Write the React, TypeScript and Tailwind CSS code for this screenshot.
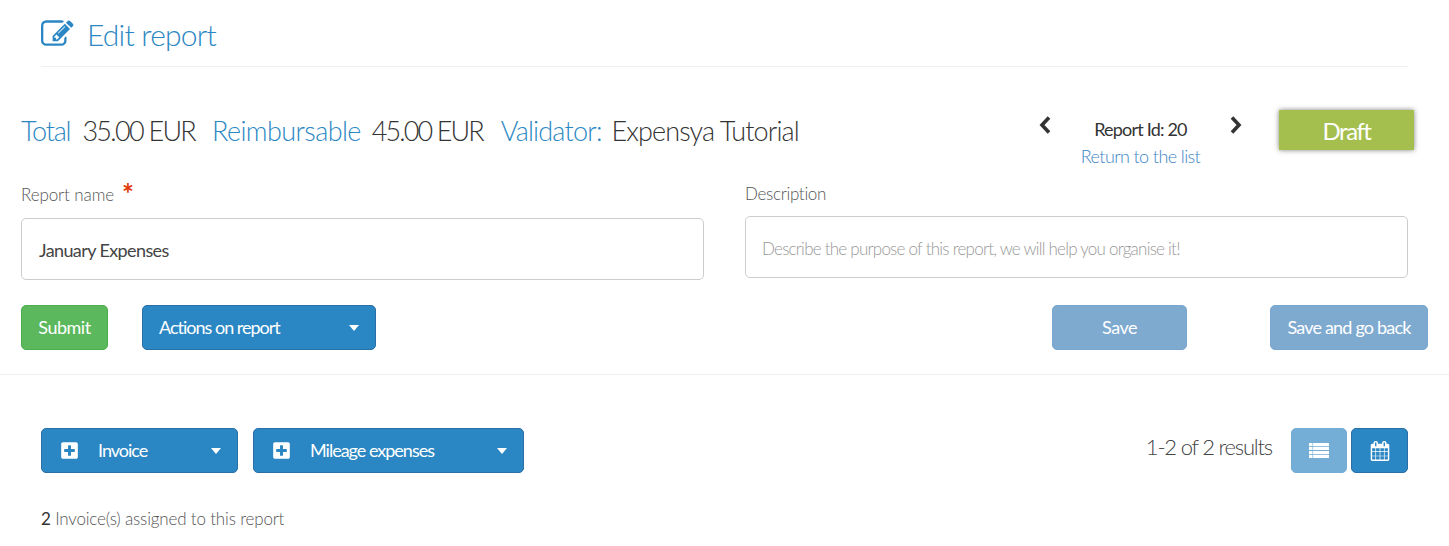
import { FaPlusSquare } from 'react-icons/fa';

function Caret() {
  return <span className="h-0 w-0 border-x-[5.5px] border-t-[6px] border-x-transparent border-t-white" />;
}

function BlueDropdown({ label, width, plus }: { label: string; width: string; plus?: boolean }) {
  return (
    <button className={`flex h-[45px] ${width} items-center rounded-[5px] border border-[#2a6fa6] bg-[#2b87c3] pr-[16px] text-[18px] text-white ${plus ? 'pl-[18px]' : 'pl-[16px]'}`}>
      {plus ? <FaPlusSquare size={19} className="mr-[19px]" /> : null}
      <span className="flex-1 text-left tracking-[-1px]">{label}</span>
      <Caret />
    </button>
  );
}

function EditIcon() {
  return (
    <svg viewBox="0 0 1792 1792" className="mr-[13.5px] h-[32.5px] w-[32.5px]" fill="currentColor">
      <path d="M888 1184l116-116-152-152-116 116v56h96v96h56zm440-720q-16-16-33 1l-350 350q-17 17-1 33t33-1l350-350q17-17 1-33zm80 594v190q0 119-84.500 203.500t-203.500 84.500h-832q-119 0-203.500-84.500t-84.500-203.500v-832q0-119 84.500-203.500t203.500-84.500h832q63 0 117 25 15 7 18 23 3 17-9 29l-49 49q-14 14-32 8-23-6-45-6h-832q-66 0-113 47t-47 113v832q0 66 47 113t113 47h832q66 0 113-47t47-113v-126q0-13 9-22l64-64q15-15 35-7t20 29zm-96-738l288 288-672 672h-288v-288zm444 132l-92 92-288-288 92-92q28-28 68-28t68 28l152 152q28 28 28 68t-28 68z" />
    </svg>
  );
}

function CalendarIcon() {
  return (
    <svg viewBox="0 0 1792 1792" className="h-[20px] w-[20px]" fill="currentColor">
      <path d="M192 1664h288v-288h-288v288zm352 0h320v-288h-320v288zm-352-352h288v-320h-288v320zm352 0h320v-320h-320v320zm-352-384h288v-288h-288v288zm736 736h320v-288h-320v288zm-384-736h320v-288h-320v288zm768 736h288v-288h-288v288zm-384-352h320v-320h-320v320zm-352-864v-288q0-13-9.500-22.500t-22.500-9.500h-64q-13 0-22.500 9.500t-9.500 22.500v288q0 13 9.500 22.500t22.500 9.500h64q13 0 22.500-9.500t9.500-22.500zm736 864h288v-320h-288v320zm-384-384h320v-288h-320v288zm384 0h288v-288h-288v288zm32-480v-288q0-13-9.500-22.500t-22.500-9.500h-64q-13 0-22.500 9.500t-9.500 22.500v288q0 13 9.500 22.500t22.500 9.500h64q13 0 22.500-9.500t9.500-22.500zm384-64v1280q0 52-38 90t-90 38h-1408q-52 0-90-38t-38-90v-1280q0-52 38-90t90-38h128v-96q0-66 47-113t113-47h64q66 0 113 47t47 113v96h384v-96q0-66 47-113t113-47h64q66 0 113 47t47 113v96h128q52 0 90 38t38 90z" />
    </svg>
  );
}

function ListIcon() {
  return (
    <svg viewBox="0 0 20 15" className="h-[15px] w-[20px]" fill="currentColor">
      <path d="M0 0h3.500v3.200H0zM4.100 0H20v3.200H4.100zM0 3.900h3.500v3.200H0zM4.100 3.900H20v3.200H4.100zM0 7.900h3.500v3.200H0zM4.100 7.900H20v3.200H4.100zM0 11.800h3.500V15H0zM4.100 11.800H20V15H4.100z" />
    </svg>
  );
}

function Chevron({ points }: { points: string }) {
  return (
    <svg viewBox="0 0 12 18" className="h-[18px] w-[12px]" fill="none" stroke="#333" strokeWidth="3.6">
      <polyline points={points} />
    </svg>
  );
}

export default function App() {
  return (
    <div className="h-[546px] w-full overflow-hidden bg-white font-['Lato',sans-serif] text-[#333]">
      <div className="mx-[41px] flex h-[67px] items-center border-b border-[#eee] pt-[3px] text-[#2b87c3]">
        <EditIcon />
        <h1 className="text-[30px] font-light tracking-[-0.8px]">Edit report</h1>
      </div>

      <div className="mt-[42px] flex h-[59px] items-start pl-[21px] pr-[35px]">
        <div className="mt-[6px] flex flex-1 items-center text-[27px] font-light leading-[32px] tracking-[-0.6px]">
          <span className="tracking-[-1.2px] text-[#2b87c3]">Total</span>
          <span className="ml-[12px] tracking-[-1.7px]">35.00 EUR</span>
          <span className="ml-[17px] text-[#2b87c3]">Reimbursable</span>
          <span className="ml-[11px] tracking-[-1.9px]">45.00 EUR</span>
          <span className="ml-[18px] tracking-[-0.8px] text-[#2b87c3]">Validator:</span>
          <span className="ml-[10px] tracking-[-0.9px]">Expensya Tutorial</span>
        </div>
        <div className="mr-[37px] flex w-[203px] items-start justify-between pt-[7px]">
          <Chevron points="10,1.500 3,9 10,16.500" />
          <div className="text-center leading-[27px]">
            <div className="text-[18px] tracking-[-0.8px]">Report Id: 20</div>
            <div className="text-[18px] font-light tracking-[-0.6px] text-[#3d85c6]">Return to the list</div>
          </div>
          <Chevron points="2,1.500 9,9 2,16.500" />
        </div>
        <div className="mt-[1px] flex h-[40px] w-[135px] items-center justify-center bg-[#a5bf4f] pt-[1px] text-[24px] tracking-[-1.5px] text-white shadow-[0_0_5px_rgba(0,0,0,0.5)]">
          Draft
        </div>
      </div>

      <div className="mt-[11px] flex pl-[21px] pr-[41px]">
        <div className="w-[683px]">
          <div className="flex h-[32px] items-center text-[17px] font-light tracking-[-0.1px] text-[#555]">
            Report name <span className="ml-[8px] mt-[-4px] text-[28px] font-bold leading-none text-[#e33a0c]">*</span>
          </div>
          <div className="mt-[7px] flex h-[62px] items-center rounded-[5px] border border-[#ccc] px-[17px] pt-[2px] text-[18px] tracking-[-0.6px] text-[#444]">
            January Expenses
          </div>
        </div>
        <div className="ml-[41px] flex-1">
          <div className="flex h-[32px] items-center pb-[2px] text-[17px] font-light tracking-[-0.3px] text-[#555]">Description</div>
          <div className="mt-[5px] flex h-[62px] items-center rounded-[5px] border border-[#ccc] px-[16px] pt-[3px] text-[17px] font-light tracking-[-0.76px] text-[#999]">
            Describe the purpose of this report, we will help you organise it!
          </div>
        </div>
      </div>

      <div className="mt-[25px] flex items-center pl-[21px] pr-[21px]">
        <button className="h-[45px] w-[87px] rounded-[5px] border border-[#4cae4c] bg-[#5cb85c] text-[18px] tracking-[-0.5px] text-white">Submit</button>
        <div className="ml-[34px]">
          <BlueDropdown label="Actions on report" width="w-[234px]" />
        </div>
        <button className="ml-auto h-[45px] w-[135px] rounded-[5px] border border-[#7aa7cf] bg-[#7faad0] text-[18px] tracking-[-0.5px] text-white">Save</button>
        <button className="ml-[83px] h-[45px] w-[158px] rounded-[5px] border border-[#7aa7cf] bg-[#7faad0] text-[18px] tracking-[-0.8px] text-white">Save and go back</button>
      </div>

      <div className="mt-[24px] border-t border-[#eee]" />

      <div className="mt-[53px] flex items-center px-[41px]">
        <BlueDropdown label="Invoice" width="w-[197px]" plus />
        <div className="ml-[15px]">
          <BlueDropdown label="Mileage expenses" width="w-[271px]" plus />
        </div>
        <span className="mb-[8px] ml-auto text-[22px] font-light tracking-[-1.2px] text-[#444]">1-2 of 2 results</span>
        <button className="ml-[19px] flex h-[45px] w-[56px] items-center justify-center rounded-[5px] border border-[#74add4] bg-[#74add6] text-white">
          <ListIcon />
        </button>
        <button className="ml-[4px] flex h-[45px] w-[57px] items-center justify-center rounded-[5px] border border-[#2a6fa6] bg-[#2b87c3] text-white">
          <CalendarIcon />
        </button>
      </div>

      <div className="mt-[33px] pl-[41px] text-[17px] font-light tracking-[-0.17px] text-[#555]">
        <span className="font-normal text-[#333]">2</span> Invoice(s) assigned to this report
      </div>
    </div>
  );
}
